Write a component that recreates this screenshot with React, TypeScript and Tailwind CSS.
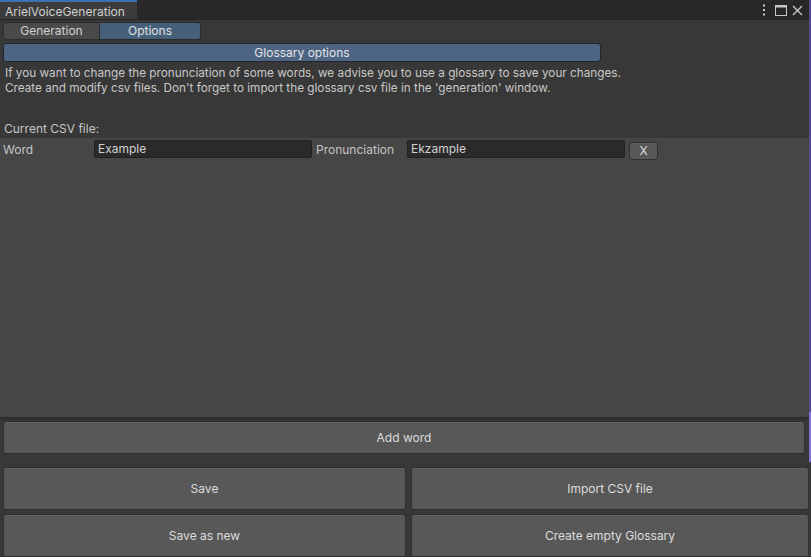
import React from "react";

const font = { fontFamily: "Inter, 'Noto Sans', 'Liberation Sans', sans-serif" };

function Btn({ children, className = "" }: { children: React.ReactNode; className?: string }) {
  return (
    <div
      className={
        "flex items-center justify-center rounded-[3px] border border-[#303030] bg-[#585858] text-[12px] text-[#dcdcdc] shadow-[inset_0_1px_0_#626262] " +
        className
      }
    >
      {children}
    </div>
  );
}

export default function App() {
  return (
    <div className="relative flex h-[557px] w-[811px] flex-col overflow-hidden bg-[#383838] text-[#c4c4c4]" style={font}>
      {/* title bar */}
      <div className="flex h-[20px] shrink-0 items-stretch bg-[#282828] border-b border-[#232323]">
        <div className="flex w-[137px] items-center border-t-2 border-[#3a72b0] bg-[#3c3c3c] pl-[5px] pt-[2px] text-[12px] text-[#d0d0d0]">
          ArielVoiceGeneration
        </div>
        <div className="flex-1" />
        <div className="flex items-center gap-[5px] pr-[8px] pt-[1px]">
          <svg width="4" height="12" viewBox="0 0 4 12">
            <rect x="1" y="0.5" width="2" height="2" fill="#c8c8c8" />
            <rect x="1" y="5" width="2" height="2" fill="#c8c8c8" />
            <rect x="1" y="9.5" width="2" height="2" fill="#c8c8c8" />
          </svg>
          <svg width="12" height="11" viewBox="0 0 12 11" className="ml-[4px]">
            <rect x="0.5" y="0.5" width="11" height="10" fill="none" stroke="#c8c8c8" strokeWidth="1" />
            <rect x="0.5" y="0.5" width="11" height="2" fill="#c8c8c8" />
          </svg>
          <svg width="11" height="11" viewBox="0 0 11 11">
            <path d="M1 1 L10 10 M10 1 L1 10" stroke="#c8c8c8" strokeWidth="1.4" />
          </svg>
        </div>
      </div>

      {/* body */}
      <div className="flex flex-1 flex-col">
        {/* tabs */}
        <div className="mx-[3px] mt-[2px] flex h-[18px] w-[198px] text-[12px]">
          <div className="flex w-[97px] items-center justify-center rounded-l-[3px] border border-[#2b2b2b] bg-[#4a4a4a] text-[#d0d0d0]">
            Generation
          </div>
          <div className="flex w-[101px] items-center justify-center rounded-r-[3px] border border-l-0 border-[#2b2b2b] bg-[#46607c] text-[#e0e0e0]">
            Options
          </div>
        </div>
        {/* glossary bar */}
        <div className="mx-[3px] mt-[3px] flex h-[19px] w-[598px] items-center justify-center rounded-[3px] border border-[#1f2630] bg-[#4d6583] text-[12px] text-[#e4e4e4]">
          Glossary options
        </div>
        {/* description */}
        <div className="mt-[4px] pl-[5px] text-[11.75px] leading-[15px] text-[#c8c8c8]">
          <div>If you want to change the pronunciation of some words, we advise you to use a glossary to save your changes.</div>
          <div>Create and modify csv files. Don't forget to import the glossary csv file in the 'generation' window.</div>
        </div>
        <div className="mt-[25px] h-[17px] pl-[4px] text-[12px] leading-[15px] text-[#c4c4c4]">Current CSV file:</div>

        {/* list area */}
        <div className="flex flex-1 flex-col bg-[#464646]">
          <div className="flex h-[22px] items-center pt-[1px]">
            <div className="w-[94px] pl-[3px] text-[12px] text-[#c4c4c4]">Word</div>
            <div className="mt-[1px] h-[18px] w-[218px] self-start rounded-[2px] border border-[#212121] bg-[#2a2a2a] pl-[3px] text-[12px] leading-[15px] text-[#d2d2d2]">
              Example
            </div>
            <div className="w-[95px] pl-[4px] text-[12px] text-[#c4c4c4]">Pronunciation</div>
            <div className="mt-[1px] h-[18px] w-[218px] self-start rounded-[2px] border border-[#212121] bg-[#2a2a2a] pl-[3px] text-[12px] leading-[15px] text-[#d2d2d2]">
              Ekzample
            </div>
            <Btn className="ml-[4px] mt-[3px] h-[18px] w-[29px]">X</Btn>
          </div>
        </div>

        {/* bottom */}
        <div className="flex shrink-0 flex-col border-t-[3px] border-[#2f2f2f] bg-[#383838]">
          <Btn className="ml-[3px] mt-[1px] h-[33px] w-[802px]">Add word</Btn>
          <div className="mt-[13px] grid grid-cols-[403px_398px] gap-x-[5px] gap-y-[4px] pl-[3px]">
            <Btn className="h-[43px]">Save</Btn>
            <Btn className="h-[43px]">Import CSV file</Btn>
            <Btn className="h-[43px]">Save as new</Btn>
            <Btn className="h-[43px]">Create empty Glossary</Btn>
          </div>
        </div>
      </div>

      {/* window edge */}
      <div className="absolute right-0 top-0 h-[412px] w-[2px] bg-[#55498a]" />
      <div className="absolute right-0 top-[412px] h-[50px] w-[2px] bg-[#8a72d4]" />
    </div>
  );
}
